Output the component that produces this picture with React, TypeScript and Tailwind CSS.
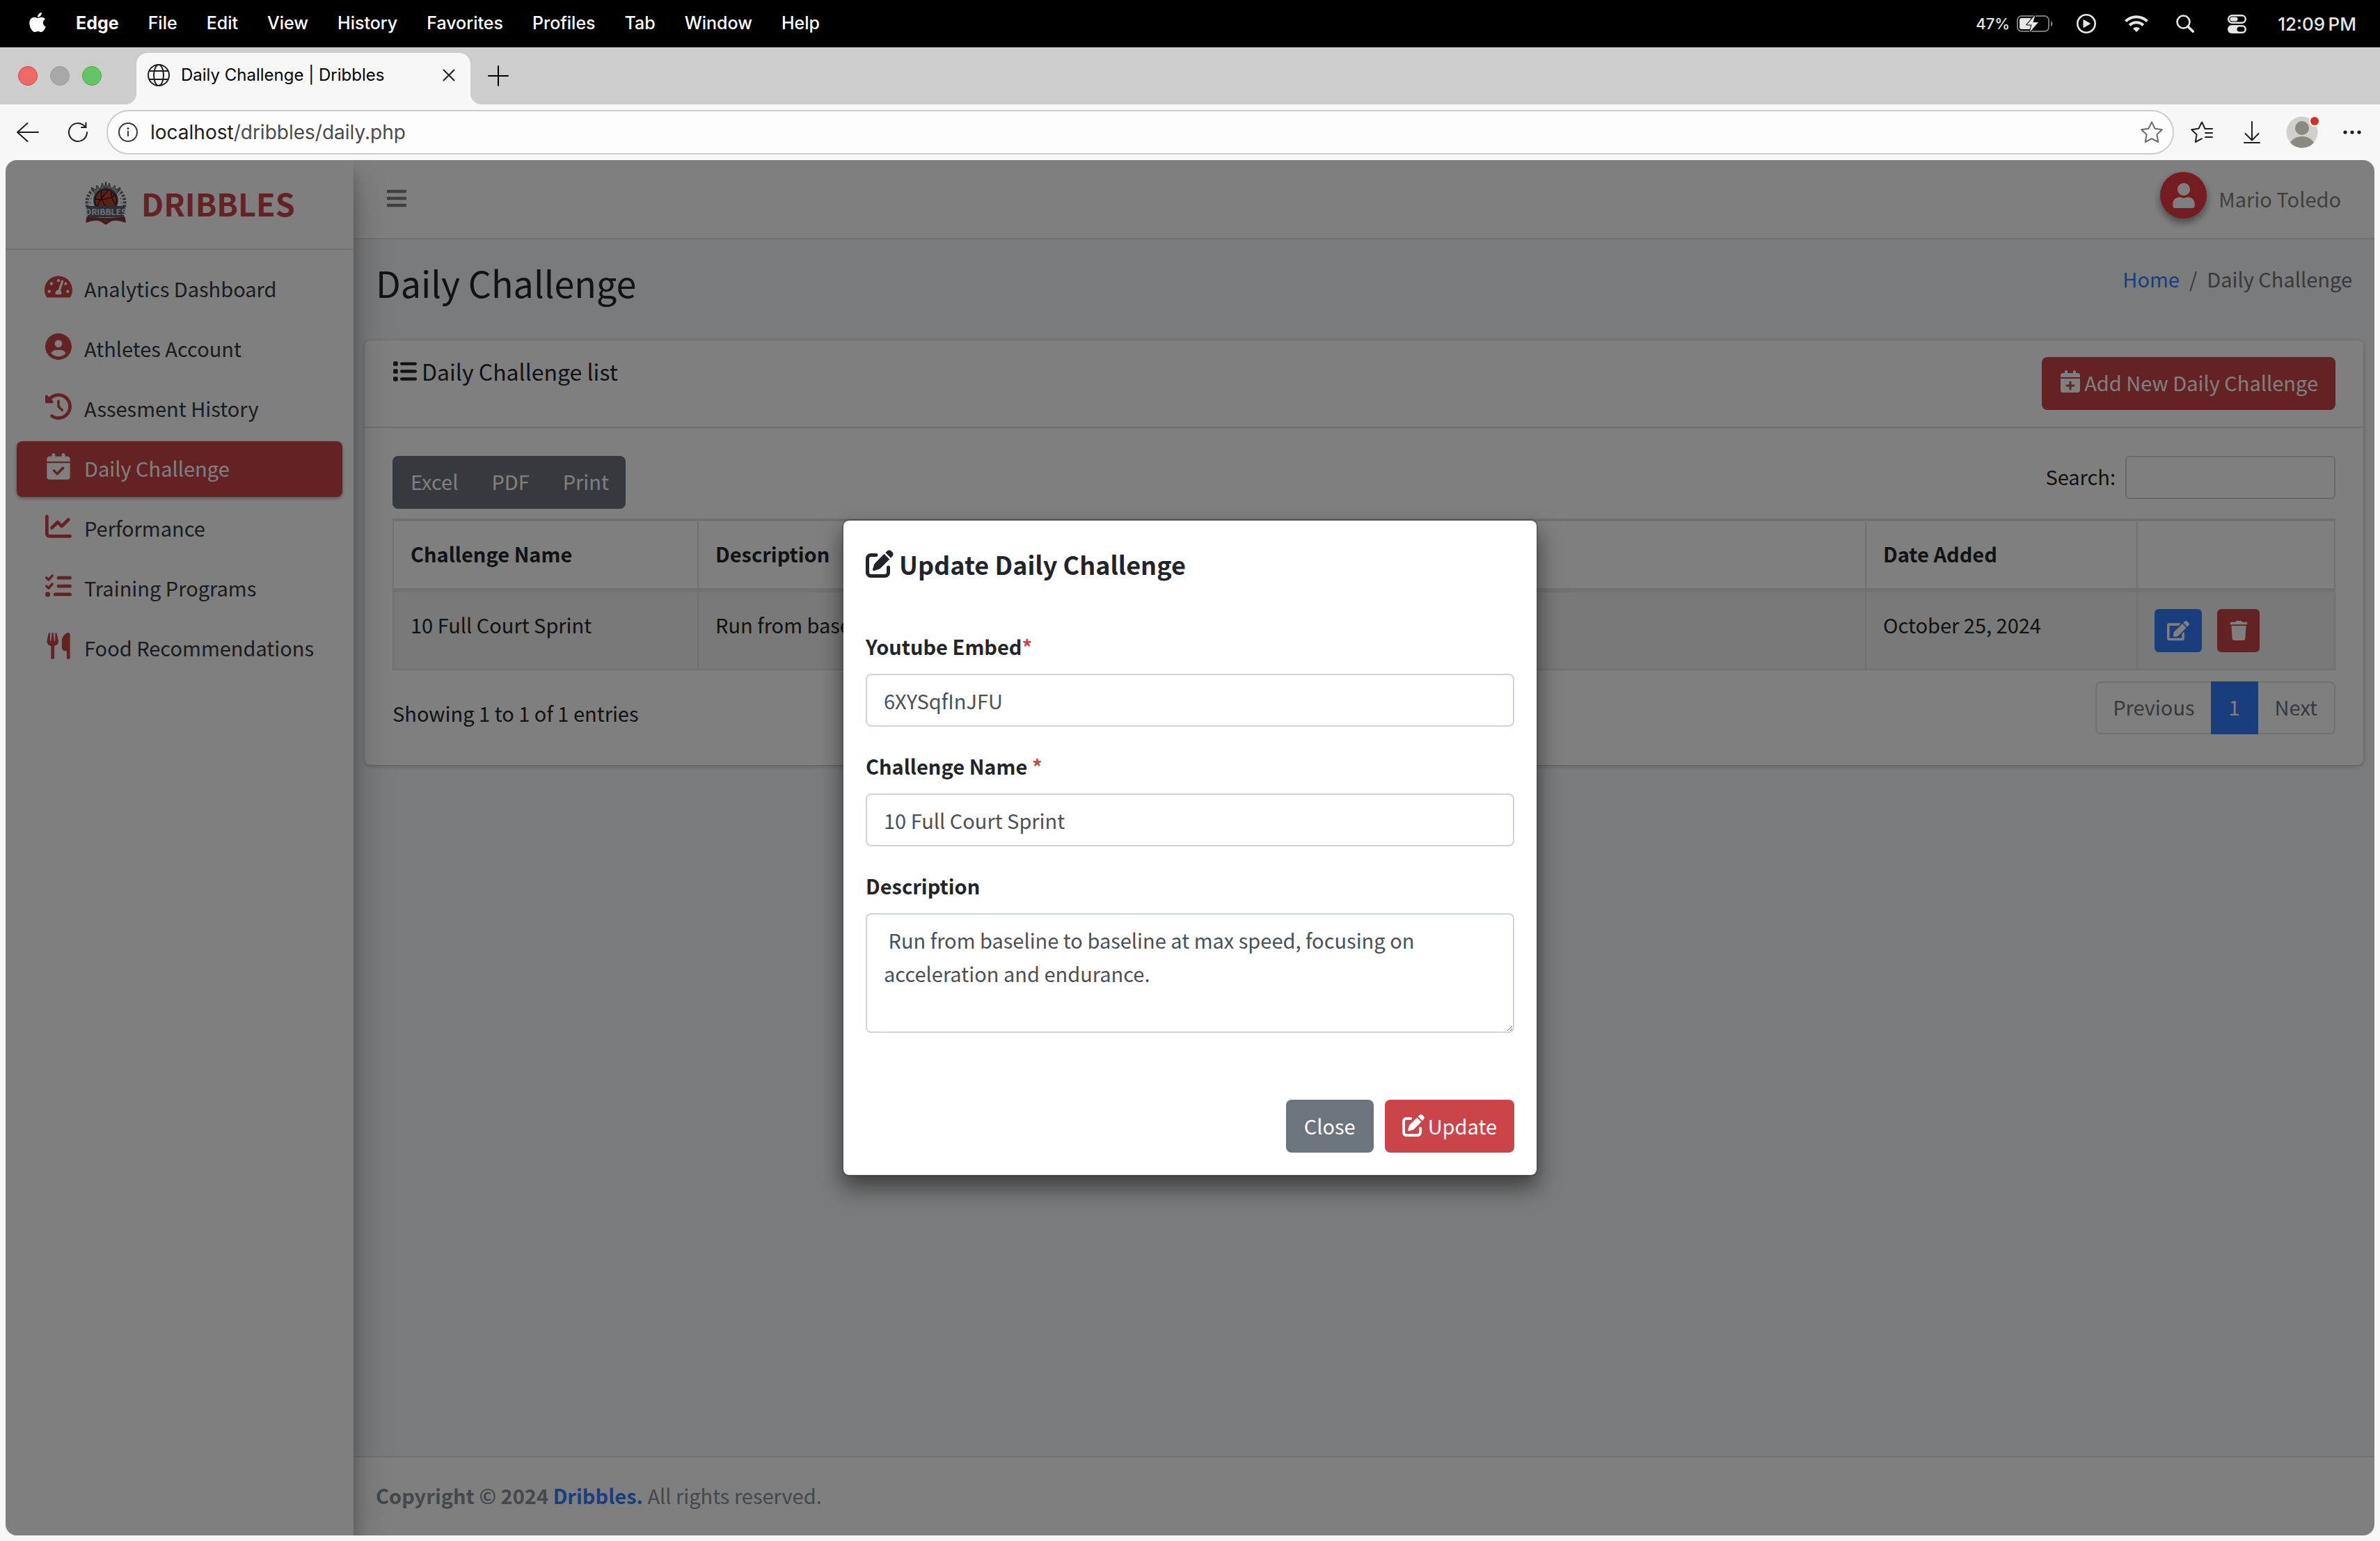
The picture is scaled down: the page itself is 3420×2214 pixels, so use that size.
import React, { useState } from "react";
import {
  FaApple,
  FaBars,
  FaEdit,
  FaTachometerAlt,
  FaTrash,
  FaUser,
} from "react-icons/fa";
import {
  FaCalendarCheck,
  FaCalendarPlus,
  FaChartLine,
  FaCircleUser,
  FaClockRotateLeft,
  FaList,
  FaListCheck,
  FaPenToSquare,
  FaUtensils,
} from "react-icons/fa6";

const menus = [
  "File",
  "Edit",
  "View",
  "History",
  "Favorites",
  "Profiles",
  "Tab",
  "Window",
  "Help",
];

const navItems = [
  { label: "Analytics Dashboard", icon: <FaTachometerAlt size={40} /> },
  { label: "Athletes Account", icon: <FaCircleUser size={38} /> },
  { label: "Assesment History", icon: <FaClockRotateLeft size={38} /> },
  { label: "Daily Challenge", icon: <FaCalendarCheck size={38} />, active: true },
  { label: "Performance", icon: <FaChartLine size={38} /> },
  { label: "Training Programs", icon: <FaListCheck size={38} /> },
  { label: "Food Recommendations", icon: <FaUtensils size={38} /> },
];

const challenges = [
  {
    name: "10 Full Court Sprint",
    description:
      "Run from baseline to baseline at max speed, focusing on acceleration and endurance.",
    date: "October 25, 2024",
  },
];

const MenuBar = () => (
  <div className="flex h-[68px] items-center justify-between bg-black pl-[41px] pr-[34px] text-[25px] font-medium text-white">
    <div className="flex items-center gap-[42px]">
      <FaApple className="mb-1 h-8 w-[26px]" />
      <button className="font-bold">Edge</button>
      {menus.map((menu) => (
        <button key={menu}>{menu}</button>
      ))}
    </div>
    <div className="flex items-center text-[#e6e6e6]">
      <span className="text-[22px]">47%</span>
      <svg className="ml-[10px] h-[26px] w-[52px]" viewBox="0 0 52 26" fill="none">
        <rect x="1" y="2" width="45" height="22" rx="6" stroke="#7a7a7a" strokeWidth="2" />
        <path d="M49 9c2 1 2.500 2.400 2.500 4s-.5 3-2.500 4z" fill="#7a7a7a" />
        <rect x="4" y="5" width="18" height="16" rx="3" fill="#e6e6e6" />
        <path
          d="M26.500 0.500L14.500 14.500h7l-3 11L31 11h-7.500z"
          fill="#e6e6e6"
          stroke="#000"
          strokeWidth="2"
          paintOrder="stroke"
          strokeLinejoin="round"
        />
      </svg>
      <svg className="ml-[34px] h-7 w-7" viewBox="0 0 28 28" fill="none">
        <circle cx="14" cy="14" r="12.700" stroke="currentColor" strokeWidth="2.600" />
        <path d="M10 8.500v11l9.500-5.500z" fill="currentColor" stroke="currentColor" strokeLinejoin="round" />
      </svg>
      <svg className="ml-[41px] h-[26px] w-[34px]" viewBox="0 0 34 26" fill="none">
        <path d="M1.500 9.500C10 1.200 24 1.200 32.500 9.500" stroke="currentColor" strokeWidth="4" />
        <path d="M7.200 15.200c5.500-5.300 14.100-5.300 19.600 0" stroke="currentColor" strokeWidth="4" />
        <path d="M12 20c2.800-2.700 7.200-2.700 10 0l-5 5z" fill="currentColor" />
      </svg>
      <svg className="ml-[40px] h-[26px] w-[26px]" viewBox="0 0 26 26" fill="none" stroke="currentColor">
        <circle cx="10.500" cy="10.500" r="9" strokeWidth="2.600" />
        <path d="M17.200 17.200l7 7" strokeWidth="3.600" strokeLinecap="round" />
      </svg>
      <svg className="ml-[48px] h-[27px] w-[27px]" viewBox="0 0 27 27" fill="none">
        <rect x="1.200" y="1.200" width="24.600" height="10.600" rx="5.300" stroke="currentColor" strokeWidth="2.400" />
        <rect x="3.500" y="3.500" width="11" height="6" rx="3" fill="currentColor" />
        <rect x="0" y="15" width="27" height="12" rx="6" fill="currentColor" />
        <rect x="13.500" y="17.500" width="11" height="7" rx="3.500" fill="#000" />
      </svg>
      <span className="ml-[45px] text-[26px]">12:09&#8201;PM</span>
    </div>
  </div>
);

const TabStrip = () => (
  <div className="flex h-[82px] items-center bg-[#cdcdcd] pl-[26px] text-[#1f1f1f]">
    <div className="flex gap-[18px]">
      <span className="h-7 w-7 rounded-full border border-[#e33e3e] bg-[#ed6a68]" />
      <span className="h-7 w-7 rounded-full border border-[#9b9b9b] bg-[#a8a8a8]" />
      <span className="h-7 w-7 rounded-full border border-[#3fae3f] bg-[#65c466]" />
    </div>
    <span className="ml-[34px] h-4 w-4 self-end bg-[radial-gradient(circle_at_0_0,transparent_16px,#f7f7f7_16px)]" />
    <div className="flex h-[74px] w-[480px] items-center self-end rounded-t-2xl bg-[#f7f7f7] pb-[10px] pl-4 pr-[22px]">
      <svg className="h-8 w-8" viewBox="0 0 32 32" fill="none" stroke="currentColor" strokeWidth="2">
        <circle cx="16" cy="16" r="15" />
        <ellipse cx="16" cy="16" rx="7" ry="15" />
        <path d="M2.500 10h27M2.500 22h27" />
      </svg>
      <span className="ml-4 flex-1 text-2xl text-black">Daily Challenge | Dribbles</span>
      <button aria-label="Close tab">
        <svg className="h-[18px] w-[18px]" viewBox="0 0 18 18" stroke="currentColor" strokeWidth="2" strokeLinecap="round">
          <path d="M1.500 1.500l15 15M16.500 1.500l-15 15" />
        </svg>
      </button>
    </div>
    <span className="h-4 w-4 self-end bg-[radial-gradient(circle_at_100%_0,transparent_16px,#f7f7f7_16px)]" />
    <button aria-label="New tab" className="ml-[9px]">
      <svg className="h-[30px] w-[30px]" viewBox="0 0 30 30" stroke="#000" strokeWidth="2" strokeLinecap="round">
        <path d="M15 1v28M1 15h28" />
      </svg>
    </button>
  </div>
);

const Toolbar = () => (
  <div className="flex h-20 items-center pl-6 pr-[27px] text-[#1f1f1f]">
    <button aria-label="Back">
      <svg className="h-8 w-8" viewBox="0 0 32 32" fill="none" stroke="currentColor" strokeWidth="2" strokeLinecap="round" strokeLinejoin="round">
        <path d="M31 16H1M15.500 3L1 16l14.500 13" />
      </svg>
    </button>
    <button aria-label="Refresh" className="ml-[41px]">
      <svg className="h-[30px] w-[30px]" viewBox="0 0 30 30" fill="none" stroke="currentColor" strokeWidth="2" strokeLinecap="round">
        <path d="M28 15a13 13 0 1 1-5-10.200L26.500 8M26.500 1.500V8h-6.500" />
      </svg>
    </button>
    <div className="ml-[26px] flex h-16 flex-1 items-center rounded-full border-2 border-[#cdcdcd] bg-[#fdfdfd] pl-[15px] pr-[14px]">
      <svg className="h-7 w-7" viewBox="0 0 28 28" fill="none" stroke="#3b3b3b" strokeWidth="2">
        <circle cx="14" cy="14" r="13" />
        <path d="M14 12v8" />
        <circle cx="14" cy="8.500" r="1.500" fill="#3b3b3b" stroke="none" />
      </svg>
      <div className="ml-[18px] flex-1 text-[28px] text-[#4a4a4a]">
        <span className="text-[#202020]">localhost</span>/dribbles/daily.php
      </div>
      <button aria-label="Add to favorites">
        <svg className="h-8 w-8" viewBox="0 0 32 32" fill="none" stroke="#6b6b6b" strokeWidth="2" strokeLinejoin="round">
          <path d="M16 1.500l4.600 9.200 10.200 1.500-7.400 7.200 1.800 10.600L16 25.200 6.800 30l1.800-10.600L1.200 12.200l10.200-1.500z" />
        </svg>
      </button>
    </div>
    <button aria-label="Favorites" className="ml-6">
      <svg className="h-8 w-8" viewBox="0 0 32 32" fill="none" stroke="currentColor" strokeWidth="2" strokeLinecap="round" strokeLinejoin="round">
        <path d="M31 11H20.600L16 1.500l-4.600 9.200-10.200 1.500 7.400 7.200L6.800 30l9.200-4.800M21 17h10M21 23h10" />
      </svg>
    </button>
    <button aria-label="Downloads" className="ml-[44px]">
      <svg className="h-8 w-6" viewBox="0 0 24 32" fill="none" stroke="currentColor" strokeWidth="2" strokeLinecap="round" strokeLinejoin="round">
        <path d="M12 1v26M2.500 18L12 27.500 21.500 18M1 31h22" />
      </svg>
    </button>
    <button aria-label="Profile" className="ml-[37px]">
      <svg className="h-[46px] w-[48px]" viewBox="0 0 48 46">
        <clipPath id="profile-clip">
          <circle cx="23" cy="23" r="22.500" />
        </clipPath>
        <g clipPath="url(#profile-clip)">
          <rect width="46" height="46" fill="#d2d0ce" />
          <circle cx="23" cy="17" r="10" fill="#8c8884" />
          <ellipse cx="23" cy="43" rx="18" ry="14" fill="#8c8884" />
        </g>
        <circle cx="41" cy="7" r="8" fill="#f7f7f7" />
        <circle cx="41" cy="7" r="6" fill="#d13022" />
      </svg>
    </button>
    <button aria-label="Settings and more" className="ml-[34px]">
      <svg className="h-6 w-[26px]" viewBox="0 0 26 24" fill="currentColor">
        <circle cx="3" cy="12" r="2.600" />
        <circle cx="13" cy="12" r="2.600" />
        <circle cx="23" cy="12" r="2.600" />
      </svg>
    </button>
  </div>
);

const Crest = () => (
  <svg className="h-[62px] w-[60px]" viewBox="0 0 60 62">
    <path d="M14 17l-5-9 7 4 1-7 5 6 3-9 3 8 2-10 2 10 3-8 3 9 5-6 1 7 7-4-5 9z" fill="#a4a9b3" stroke="#454b57" />
    <path d="M12 11C4 18 1 28 4 39M48 11c8 7 11 17 8 28" fill="none" stroke="#666d7a" strokeWidth="5" strokeDasharray="3 2" />
    <path d="M16 13C8 20 6 30 9 39M44 13c8 7 10 17 7 26" fill="none" stroke="#a4a9b3" strokeWidth="2" strokeDasharray="3 3" />
    <circle cx="30" cy="27" r="18" fill="#555b67" />
    <circle cx="30" cy="27" r="15.500" fill="#b5432f" stroke="#262932" strokeWidth="1.500" />
    <path d="M15 25c10 2 20 0 29-6M24 13c-2 10 2 20 12 28M34 12c-8 8-14 16-16 24M38 15c0 8 2 14 7 18" fill="none" stroke="#3c1a16" strokeWidth="1.500" />
    <path d="M2 35h56l-2 16H4z" fill="#59606d" />
    <path d="M3 51c14 2 40 2 54 0l1 7c-8-3-16-3-20-2l-8 5-8-5c-4-1-12-1-20 2z" fill="#454a55" stroke="#a8323a" strokeWidth="1.500" />
    <circle cx="30" cy="56" r="3" fill="#b5382d" />
    <text x="30" y="48" textAnchor="middle" fontSize="12" fontWeight="700" fill="#dfe2e8">
      DRIBBLES
    </text>
  </svg>
);

const Sidebar = () => (
  <aside className="relative z-10 w-[500px] shrink-0 bg-white shadow-[0_28px_56px_rgba(0,0,0,0.25),0_20px_20px_rgba(0,0,0,0.22)]">
    <a href="#" className="flex h-[129px] items-center gap-[21px] border-b-2 border-[#dee2e6] pb-1 pl-[114px] text-[#cb444a]">
      <Crest />
      <span className="text-[45px] font-bold leading-[60px]">DRIBBLES</span>
    </a>
    <nav className="flex flex-col gap-[6px] px-4 py-[17px]">
      {navItems.map((item) => (
        <a
          key={item.label}
          href="#"
          className={
            item.active
              ? "flex h-20 items-center gap-[10px] rounded-lg bg-[#cb444a] pb-1 pl-[33px] text-white shadow-[0_2px_6px_rgba(0,0,0,0.12),0_2px_4px_rgba(0,0,0,0.24)]"
              : "flex h-20 items-center gap-[10px] rounded-lg pb-1 pl-[33px] text-[#343a40]"
          }
        >
          <span className={item.active ? "mb-1 flex w-[54px] justify-center" : "mb-1 flex w-[54px] justify-center text-[#cb444a]"}>
            {item.icon}
          </span>
          {item.label}
        </a>
      ))}
    </nav>
  </aside>
);

const ChallengeCard = () => (
  <section className="mx-4 rounded-lg bg-white shadow-[0_0_2px_rgba(0,0,0,0.125),0_2px_6px_rgba(0,0,0,0.2)]">
    <div className="flex items-start justify-between border-b-2 border-[#dfdfdf] px-10 py-6">
      <h3 className="flex items-center gap-[7px] text-[32px] leading-[40px]">
        <FaList size={35} />
        Daily Challenge list
      </h3>
      <button className="flex h-[76px] items-center gap-1 rounded-lg bg-[#cb444a] px-[25px] pb-1 text-white">
        <FaCalendarPlus size={32} className="mb-0.5" />
        Add New Daily Challenge
      </button>
    </div>
    <div className="px-10 pb-11 pt-10">
      <div className="flex items-start justify-between">
        <div className="flex h-[76px] overflow-hidden rounded-lg bg-[#6c757d] text-white">
          <button className="pb-1 pl-[26px] pr-6">Excel</button>
          <button className="px-6 pb-1">PDF</button>
          <button className="px-6 pb-1">Print</button>
        </div>
        <label className="flex items-center gap-[14px]">
          <span className="pb-1">Search:</span>
          <input type="search" className="h-[62px] w-[302px] rounded-md border-2 border-[#ced4da] bg-white px-4" />
        </label>
      </div>

      <table className="mt-[14px] w-full table-fixed border-separate border-spacing-0 border-l-2 border-t-2 border-[#dee2e6] text-left">
        <thead>
          <tr>
            <th className="w-[438px] border-b-4 border-r-2 border-t-2 border-[#dee2e6] px-6 pb-[26px] pt-[22px]">Challenge Name</th>
            <th className="border-b-4 border-r-2 border-t-2 border-[#dee2e6] px-6 pb-[26px] pt-[22px]">Description</th>
            <th className="w-[390px] border-b-4 border-r-2 border-t-2 border-[#dee2e6] px-6 pb-[26px] pt-[22px]">Date Added</th>
            <th className="w-[284px] border-b-4 border-r-2 border-t-2 border-[#dee2e6] px-6 pb-[26px] pt-[22px]" />
          </tr>
        </thead>
        <tbody>
          {challenges.map((challenge) => (
            <tr key={challenge.name} className="bg-[#f2f2f2] align-top">
              <td className="border-b-2 border-r-2 border-t-2 border-[#dee2e6] px-6 pt-[22px]">{challenge.name}</td>
              <td className="border-b-2 border-r-2 border-t-2 border-[#dee2e6] px-6 pt-[22px]">{challenge.description}</td>
              <td className="border-b-2 border-r-2 border-t-2 border-[#dee2e6] px-6 pt-[22px]">{challenge.date}</td>
              <td className="border-b-2 border-r-2 border-t-2 border-[#dee2e6] p-6">
                <div className="flex gap-[22px] text-white">
                  <button aria-label="Edit" className="flex h-[62px] w-[68px] items-center justify-center rounded-md bg-[#357bfc]">
                    <FaEdit size={32} />
                  </button>
                  <button aria-label="Delete" className="flex h-[62px] w-[61px] items-center justify-center rounded-md bg-[#cb444a]">
                    <FaTrash size={28} />
                  </button>
                </div>
              </td>
            </tr>
          ))}
        </tbody>
      </table>

      <div className="mt-4 flex items-start justify-between">
        <p className="pt-[21px]">Showing 1 to 1 of 1 entries</p>
        <div className="flex h-[76px] text-[#6c757d]">
          <button className="rounded-l-lg border-2 border-r-0 border-[#dee2e6] px-[23px] pb-1">Previous</button>
          <button className="w-[68px] bg-[#357bfc] pb-1 text-white">1</button>
          <button className="rounded-r-lg border-2 border-l-0 border-[#dee2e6] px-6 pb-1">Next</button>
        </div>
      </div>
    </div>
  </section>
);

const UpdateModal = () => {
  const [embed, setEmbed] = useState("6XYSqfInJFU");
  const [name, setName] = useState("10 Full Court Sprint");
  const [description, setDescription] = useState(
    " Run from baseline to baseline at max speed, focusing on acceleration and endurance."
  );

  return (
    <div className="absolute inset-0 z-20 flex items-center justify-center bg-black/50">
      <form
        role="dialog"
        aria-label="Update Daily Challenge"
        onSubmit={(e) => e.preventDefault()}
        className="w-[1000px] rounded-[10px] border-2 border-black/20 bg-white bg-clip-padding shadow-[0_16px_32px_rgba(0,0,0,0.5)]"
      >
        <h5 className="flex items-center gap-2 p-8 text-[36px] font-bold leading-[60px]">
          <FaPenToSquare size={40} />
          Update Daily Challenge
        </h5>
        <div className="flex flex-col gap-8 px-8 pb-16 pt-8">
          <div className="flex flex-col gap-4">
            <label htmlFor="embed" className="font-bold">
              Youtube Embed<span className="text-[#cb444a]">*</span>
            </label>
            <input
              id="embed"
              value={embed}
              onChange={(e) => setEmbed(e.target.value)}
              className="h-[76px] rounded-lg border-2 border-[#ced4da] px-6 text-[#495057]"
            />
          </div>
          <div className="flex flex-col gap-4">
            <label htmlFor="name" className="font-bold">
              Challenge Name <span className="text-[#cb444a]">*</span>
            </label>
            <input
              id="name"
              value={name}
              onChange={(e) => setName(e.target.value)}
              className="h-[76px] rounded-lg border-2 border-[#ced4da] px-6 text-[#495057]"
            />
          </div>
          <div className="flex flex-col gap-4">
            <label htmlFor="description" className="font-bold">
              Description
            </label>
            <textarea
              id="description"
              rows={3}
              value={description}
              onChange={(e) => setDescription(e.target.value)}
              className="rounded-lg border-2 border-[#ced4da] px-6 py-3 text-[#495057]"
            />
          </div>
        </div>
        <div className="flex justify-end gap-4 p-8 text-white">
          <button type="button" className="h-[76px] rounded-lg bg-[#6c757d] px-[26px] pb-0.5">
            Close
          </button>
          <button type="submit" className="flex h-[76px] items-center gap-[5px] rounded-lg bg-[#cb444a] px-[25px] pb-0.5">
            <FaPenToSquare size={32} />
            Update
          </button>
        </div>
      </form>
    </div>
  );
};

const App = () => {
  return (
    <div className="flex min-h-screen flex-col bg-[#f7f7f7] font-['Inter',sans-serif]">
      <MenuBar />
      <TabStrip />
      <Toolbar />

      <div className="relative mx-2 mb-2 flex flex-1 overflow-hidden rounded-2xl bg-[#f4f6f9] font-['Noto_Sans_CJK_SC',sans-serif] text-[29px] leading-[48px] text-[#212529]">
        <Sidebar />
        <div className="flex min-w-0 flex-1 flex-col">
          {/* Navbar */}
          <header className="flex h-[114px] items-center justify-between border-b-2 border-[#dee2e6] bg-white px-12 pb-[3px] text-[#808080]">
            <button aria-label="Toggle sidebar">
              <FaBars size={32} className="h-8 w-7" />
            </button>
            <div className="flex items-center gap-[17px]">
              <span className="mb-2 flex h-[67px] w-[67px] items-center justify-center rounded-full bg-[#e83844] text-white shadow-[0_6px_12px_rgba(0,0,0,0.25),0_6px_12px_rgba(0,0,0,0.22)]">
                <FaUser size={36} />
              </span>
              Mario Toledo
            </div>
          </header>

          <div className="flex items-start justify-between px-8 pb-[49px] pt-7">
            <h1 className="text-[52px] leading-[68px]">Daily Challenge</h1>
            <div className="mt-1 flex gap-[14px] text-[#6c757d]">
              <a href="#" className="text-[#357bfc]">Home</a>
              <span>/</span>
              <span>Daily Challenge</span>
            </div>
          </div>

          <ChallengeCard />

          <footer className="mt-auto border-t-2 border-[#dee2e6] bg-white px-8 pb-[34px] pt-[30px] text-[#869099]">
            <strong>
              Copyright © 2024 <a href="#" className="text-[#357bfc]">Dribbles.</a>
            </strong>{" "}
            All rights reserved.
          </footer>
        </div>
        <UpdateModal />
      </div>
    </div>
  );
};

export default App;
